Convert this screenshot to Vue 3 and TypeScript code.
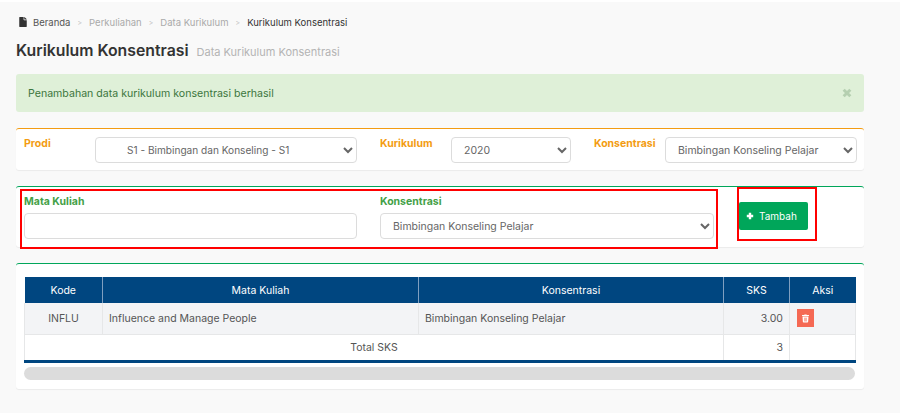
<script setup lang="ts">
interface Course {
  kode: string;
  nama: string;
  konsentrasi: string;
  sks: string;
}

const crumbs = ['Perkuliahan', 'Data Kurikulum'];

const courses: Course[] = [
  { kode: 'INFLU', nama: 'Influence and Manage People', konsentrasi: 'Bimbingan Konseling Pelajar', sks: '3.00' },
];
</script>

<template>
  <div class="page">
    <nav class="breadcrumb">
      <svg class="file-icon" viewBox="0 0 384 512" aria-hidden="true">
        <path d="M224 136V0H24C10.700 0 0 10.700 0 24v464c0 13.300 10.700 24 24 24h336c13.300 0 24-10.700 24-24V160H248c-13.200 0-24-10.800-24-24zm160-14.100v6.100H256V0h6.100c6.400 0 12.500 2.500 17 7l97.900 98c4.500 4.500 7 10.600 7 16.900z" />
      </svg>
      <span class="crumb-home">Beranda</span>
      <template v-for="crumb in crumbs" :key="crumb">
        <span class="crumb-sep">&gt;</span>
        <span class="crumb-muted">{{ crumb }}</span>
      </template>
      <span class="crumb-sep">&gt;</span>
      <span class="crumb-active">Kurikulum Konsentrasi</span>
    </nav>

    <header class="page-title">
      <h1>Kurikulum Konsentrasi</h1>
      <small>Data Kurikulum Konsentrasi</small>
    </header>

    <div class="alert">
      <span>Penambahan data kurikulum konsentrasi berhasil</span>
      <svg class="alert-close" viewBox="0 0 12 12" aria-hidden="true">
        <path d="M2 2l8 8M10 2l-8 8" />
      </svg>
    </div>

    <section class="card card-orange filter-grid">
      <label class="orange-label">Prodi</label>
      <select class="field prodi-select"><option>S1 - Bimbingan dan Konseling - S1</option></select>
      <label class="orange-label indented">Kurikulum</label>
      <select class="field"><option>2020</option></select>
      <label class="orange-label indented">Konsentrasi</label>
      <select class="field"><option>Bimbingan Konseling Pelajar</option></select>
    </section>

    <section class="card card-green add-row">
      <div class="add-col col-course">
        <label class="green-label">Mata Kuliah</label>
        <input class="field course-input" type="text" />
      </div>
      <div class="add-col col-konsentrasi">
        <label class="green-label">Konsentrasi</label>
        <select class="field"><option>Bimbingan Konseling Pelajar</option></select>
      </div>
      <button class="btn-add" type="button">
        <svg viewBox="0 0 10 10" aria-hidden="true"><path d="M5 1v8M1 5h8" /></svg>
        Tambah
      </button>
      <div class="mark mark-fields"></div>
      <div class="mark mark-button"></div>
    </section>

    <section class="card card-green table-card">
      <table>
        <colgroup>
          <col class="col-kode" />
          <col class="col-nama" />
          <col class="col-konsentrasi-tbl" />
          <col class="col-narrow" />
          <col class="col-narrow" />
        </colgroup>
        <thead>
          <tr>
            <th>Kode</th>
            <th>Mata Kuliah</th>
            <th>Konsentrasi</th>
            <th>SKS</th>
            <th>Aksi</th>
          </tr>
        </thead>
        <tbody>
          <tr v-for="course in courses" :key="course.kode" class="row-data">
            <td class="center">{{ course.kode }}</td>
            <td>{{ course.nama }}</td>
            <td>{{ course.konsentrasi }}</td>
            <td class="right">{{ course.sks }}</td>
            <td>
              <button class="btn-delete" type="button" aria-label="Hapus">
                <svg viewBox="0 0 448 512" aria-hidden="true">
                  <path d="M432 32H312l-9.400-18.700A24 24 0 0 0 281.100 0H166.800a23.700 23.700 0 0 0-21.400 13.300L136 32H16A16 16 0 0 0 0 48v32a16 16 0 0 0 16 16h416a16 16 0 0 0 16-16V48a16 16 0 0 0-16-16zM53.200 467a48 48 0 0 0 47.900 45h245.800a48 48 0 0 0 47.900-45L416 128H32zM144 208a16 16 0 0 1 32 0v224a16 16 0 0 1-32 0zm64 0a16 16 0 0 1 32 0v224a16 16 0 0 1-32 0zm64 0a16 16 0 0 1 32 0v224a16 16 0 0 1-32 0z" />
                </svg>
              </button>
            </td>
          </tr>
          <tr class="row-total">
            <td colspan="3" class="center">Total SKS</td>
            <td class="right">3</td>
            <td></td>
          </tr>
        </tbody>
      </table>
      <div class="scroll-track"></div>
    </section>
  </div>
</template>

<style>
html,
body {
  margin: 0;
  background: #f9f9f9;
}
</style>

<style scoped>
.page {
  box-sizing: border-box;
  width: 900px;
  height: 413px;
  overflow: hidden;
  padding: 15px 36px 0 16px;
  background: #f9f9f9;
  border-top: 2px solid #fff;
  font-family: Inter, "Open Sans", sans-serif;
  font-size: 10.5px;
  color: #444;
}

.breadcrumb {
  display: flex;
  align-items: center;
  height: 10px;
  margin-left: 3px;
  font-size: 9.5px;
}
.file-icon {
  width: 8px;
  height: 10px;
  fill: #333;
  margin-right: 6px;
}
.crumb-home {
  color: #555;
}
.crumb-sep {
  margin: 0 7px;
  font-size: 7px;
  color: #bbb;
}
.crumb-muted {
  color: #aaa;
}
.crumb-active {
  color: #333;
}

.page-title {
  display: flex;
  align-items: baseline;
  gap: 8px;
  margin-top: 14px;
  height: 22px;
}
.page-title h1 {
  margin: 0;
  font-size: 15.8px;
  font-weight: 600;
  color: #333;
}
.page-title small {
  font-size: 11px;
  color: #b4b4b4;
}

.alert {
  display: flex;
  align-items: center;
  justify-content: space-between;
  box-sizing: border-box;
  height: 38px;
  margin-top: 11px;
  padding: 0 12px;
  background: #dff0d8;
  border-radius: 3px;
  color: #3c763d;
  font-size: 10.6px;
}
.alert-close {
  width: 10px;
  height: 10px;
  fill: none;
  stroke: #b5cfb0;
  stroke-width: 3.5;
}

.card {
  position: relative;
  box-sizing: border-box;
  background: #fff;
  border-radius: 3px;
  box-shadow: 0 1px 1px rgba(0, 0, 0, 0.06);
}
.card-orange {
  border-top: 1.5px solid #f39c12;
}
.card-green {
  border-top: 1.5px solid #00a65a;
}

.filter-grid {
  display: grid;
  grid-template-columns: 71px 262px 94px 120px 94px 192px;
  align-items: start;
  height: 42px;
  margin-top: 16px;
  padding: 8px 7px 0 8px;
}
.orange-label {
  font-weight: 700;
  font-size: 10.5px;
  line-height: 14px;
  color: #f39c12;
}
.indented {
  margin-left: 23px;
}
.green-label {
  display: block;
  height: 18px;
  font-weight: 700;
  font-size: 10.5px;
  line-height: 14px;
  color: #43a047;
}

.field {
  display: block;
  box-sizing: border-box;
  width: 100%;
  height: 26px;
  padding: 0 8px;
  background: #fff;
  border: 1px solid #dcdcdc;
  border-radius: 4px;
  font-family: inherit;
  font-size: 10.5px;
  color: #666;
}
.prodi-select {
  padding-left: 27px;
  font-size: 10.1px;
}

.add-row {
  display: flex;
  align-items: flex-start;
  height: 61px;
  margin-top: 16px;
  padding: 8px 0 0 8px;
}
.add-col {
  flex: none;
}
.col-course {
  width: 333px;
}
.col-konsentrasi {
  width: 334px;
  margin-left: 23px;
}
.btn-add {
  display: flex;
  align-items: center;
  gap: 5px;
  box-sizing: border-box;
  width: 69px;
  height: 28px;
  margin: 7px 0 0 25px;
  padding: 0 0 0 7px;
  background: #00a65a;
  border: 0;
  border-radius: 2px;
  font-family: inherit;
  font-size: 10px;
  color: #fff;
}
.btn-add svg {
  width: 8px;
  height: 8px;
  fill: none;
  stroke: #fff;
  stroke-width: 3;
}

.mark {
  position: absolute;
  box-sizing: border-box;
  border: 2px solid #f00;
}
.mark-fields {
  left: 4px;
  top: 2px;
  width: 698px;
  height: 60px;
}
.mark-button {
  left: 721px;
  top: 0;
  width: 80px;
  height: 54px;
}

.table-card {
  height: 126px;
  margin-top: 16px;
  padding: 13px 8px 0 8px;
}
table {
  table-layout: fixed;
  width: 831px;
  border-collapse: collapse;
  border-bottom: 3px solid #004680;
  font-size: 10.5px;
}
.col-kode {
  width: 78px;
}
.col-nama {
  width: 316px;
}
.col-konsentrasi-tbl {
  width: 305px;
}
.col-narrow {
  width: 66px;
}
th {
  box-sizing: border-box;
  height: 26px;
  padding: 0;
  background: #004680;
  border-left: 1px solid #7f9fc0;
  font-weight: 400;
  color: #fff;
  text-align: center;
}
th:first-child {
  border-left: 0;
}
td {
  box-sizing: border-box;
  padding: 0 6px;
  border: 1px solid #e6e7e8;
  border-top: 0;
  color: #555;
}
.row-data td {
  height: 31px;
  background: #f3f4f6;
}
.row-total td {
  height: 27px;
  background: #fff;
}
.center {
  text-align: center;
}
.right {
  text-align: right;
}
.btn-delete {
  display: flex;
  align-items: center;
  justify-content: center;
  width: 17px;
  height: 18px;
  margin-left: 1px;
  padding: 0;
  background: #f56954;
  border: 0;
}
.btn-delete svg {
  width: 7px;
  height: 9px;
  fill: #fff;
}
.scroll-track {
  width: 831px;
  height: 13px;
  margin-top: 4px;
  background: #dcdcdc;
  border-radius: 7px;
}
</style>
